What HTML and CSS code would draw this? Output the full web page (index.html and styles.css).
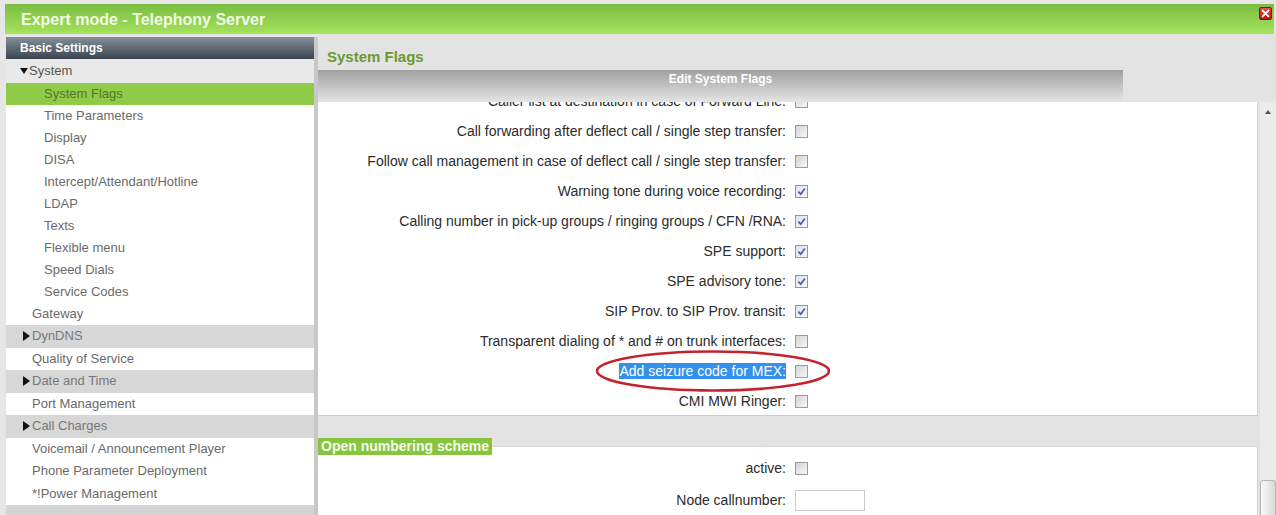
FILE: index.html
```html
<!DOCTYPE html>
<html lang="en">
<head>
<meta charset="utf-8">
<title>Expert mode - Telephony Server</title>
<link rel="stylesheet" href="styles.css">
</head>
<body>
<div class="app">
  <header class="titlebar">
    <h1 class="titlebar-text">Expert mode - Telephony Server</h1>
    <button class="close-btn" type="button" aria-label="Close">
      <svg viewBox="0 0 11 11" width="11" height="11"><path d="M2.6 2.6 L8.4 8.4 M8.4 2.6 L2.6 8.4" stroke="#fff" stroke-width="2" stroke-linecap="round"/></svg>
    </button>
  </header>

  <div class="main">
    <nav class="sidebar">
      <div class="nav-head">Basic Settings</div>
      <ul class="nav">
        <li class="nav-group open">System</li>
        <li class="nav-sub active">System Flags</li>
        <li class="nav-sub">Time Parameters</li>
        <li class="nav-sub">Display</li>
        <li class="nav-sub">DISA</li>
        <li class="nav-sub">Intercept/Attendant/Hotline</li>
        <li class="nav-sub">LDAP</li>
        <li class="nav-sub">Texts</li>
        <li class="nav-sub">Flexible menu</li>
        <li class="nav-sub">Speed Dials</li>
        <li class="nav-sub">Service Codes</li>
        <li class="nav-top">Gateway</li>
      </ul>
      <ul class="nav nav-loose">
        <li class="nav-group closed">DynDNS</li>
        <li class="nav-top">Quality of Service</li>
        <li class="nav-group closed">Date and Time</li>
        <li class="nav-top">Port Management</li>
        <li class="nav-group closed">Call Charges</li>
        <li class="nav-top">Voicemail / Announcement Player</li>
        <li class="nav-top">Phone Parameter Deployment</li>
        <li class="nav-top">*!Power Management</li>
      </ul>
    </nav>

    <section class="content">
      <h2 class="page-title">System Flags</h2>
      <div class="tabbar">Edit System Flags</div>

      <div class="content-body">
        <div class="pane">
          <div class="flags">
            <div class="flag-list">
              <div class="field"><label>Caller list at destination in case of Forward Line:</label><span class="cb"></span></div>
              <div class="field"><label>Call forwarding after deflect call / single step transfer:</label><span class="cb"></span></div>
              <div class="field"><label>Follow call management in case of deflect call / single step transfer:</label><span class="cb"></span></div>
              <div class="field"><label>Warning tone during voice recording:</label><span class="cb checked"><svg viewBox="0 0 11 11" width="11" height="11"><path d="M2.4 5.6 L4.7 8.2 L8.9 2.6" fill="none" stroke="#4a58a6" stroke-width="1.7"/></svg></span></div>
              <div class="field"><label>Calling number in pick-up groups / ringing groups / CFN /RNA:</label><span class="cb checked"><svg viewBox="0 0 11 11" width="11" height="11"><path d="M2.4 5.6 L4.7 8.2 L8.9 2.6" fill="none" stroke="#4a58a6" stroke-width="1.7"/></svg></span></div>
              <div class="field"><label>SPE support:</label><span class="cb checked"><svg viewBox="0 0 11 11" width="11" height="11"><path d="M2.4 5.6 L4.7 8.2 L8.9 2.6" fill="none" stroke="#4a58a6" stroke-width="1.7"/></svg></span></div>
              <div class="field"><label>SPE advisory tone:</label><span class="cb checked"><svg viewBox="0 0 11 11" width="11" height="11"><path d="M2.4 5.6 L4.7 8.2 L8.9 2.6" fill="none" stroke="#4a58a6" stroke-width="1.7"/></svg></span></div>
              <div class="field"><label>SIP Prov. to SIP Prov. transit:</label><span class="cb checked"><svg viewBox="0 0 11 11" width="11" height="11"><path d="M2.4 5.6 L4.7 8.2 L8.9 2.6" fill="none" stroke="#4a58a6" stroke-width="1.7"/></svg></span></div>
              <div class="field"><label>Transparent dialing of * and # on trunk interfaces:</label><span class="cb"></span></div>
              <div class="field"><label><span class="selected">Add seizure code for MEX:<svg class="mark" viewBox="0 0 238 44" width="238" height="44"><ellipse cx="118" cy="22" rx="116" ry="19.5" fill="none" stroke="#c4232b" stroke-width="2.6"/></svg></span></label><span class="cb"></span></div>
              <div class="field"><label>CMI MWI Ringer:</label><span class="cb"></span></div>
            </div>
          </div>

          <div class="numbering">
            <div class="legend">Open numbering scheme</div>
            <div class="field"><label>active:</label><span class="cb"></span></div>
            <div class="field"><label>Node callnumber:</label><span class="textbox"></span></div>
          </div>
        </div>

        <div class="scrollbar">
          <span class="sb-arrow"></span>
          <span class="sb-thumb"></span>
        </div>
      </div>
    </section>
  </div>
</div>
</body>
</html>
```

FILE: styles.css
```css
* {
  box-sizing: border-box;
}

html,
body {
  margin: 0;
  height: 100%;
}

body {
  background: #e6e6e6;
  font-family: "Liberation Sans", Arial, sans-serif;
  overflow: hidden;
}

.app {
  height: 515px;
  display: flex;
  flex-direction: column;
  padding-top: 4px;
}

/* ---------- window title ---------- */
.titlebar {
  height: 30px;
  margin: 0 2px 0 5px;
  display: flex;
  justify-content: space-between;
  align-items: flex-start;
  background: linear-gradient(#79bc40, #a6e35d);
}

.titlebar-text {
  margin: 0;
  padding: 2px 0 0 16px;
  font-size: 16px;
  line-height: 28px;
  font-weight: bold;
  color: #f1f9e6;
}

.close-btn {
  margin: 3px 2px 0 0;
  width: 13px;
  height: 13px;
  padding: 0;
  border: 1px solid #8a0d0d;
  border-radius: 2px;
  background: linear-gradient(#ee4a42, #b3140f);
  display: flex;
  align-items: center;
  justify-content: center;
}

/* ---------- layout ---------- */
.main {
  flex: 1;
  min-height: 0;
  display: flex;
}

.sidebar {
  width: 312px;
  margin: 3px 0 0 6px;
  background: #d4d4d4;
  border-right: 4px solid #c8c8c8;
}

.content {
  flex: 1;
  min-width: 0;
  display: flex;
  flex-direction: column;
  background: #e3e3e3;
}

/* ---------- navigation ---------- */
.nav-head {
  height: 22px;
  line-height: 22px;
  padding-left: 14px;
  font-size: 12px;
  font-weight: bold;
  color: #fff;
  background: linear-gradient(#858f98, #3a4450);
}

.nav {
  list-style: none;
  margin: 0;
  padding: 0;
  font-size: 13px;
}

.nav li {
  height: 22px;
  line-height: 22px;
  background: #fff;
  color: #6a6a6a;
  white-space: nowrap;
}

.nav-loose li {
  height: 22.5px;
  line-height: 22.5px;
}

.nav-sub {
  padding-left: 38px;
}

.nav-top {
  padding-left: 26px;
}

.nav .nav-group {
  display: flex;
  align-items: center;
  background: #d7d7d7;
  color: #777;
  padding-left: 17px;
}

.nav-group.closed::before {
  content: "";
  margin-right: 2px;
  border-top: 5px solid transparent;
  border-bottom: 5px solid transparent;
  border-left: 7px solid #111;
}

.nav .nav-group.open {
  height: 24px;
  background: #e9e9e9;
  color: #555;
  padding-left: 14px;
}

.nav-group.open::before {
  content: "";
  margin-right: 1px;
  border-left: 4.5px solid transparent;
  border-right: 4.5px solid transparent;
  border-top: 6px solid #111;
}

.nav .nav-sub.active {
  background: #8fcb47;
  color: #55742f;
}

/* ---------- page header ---------- */
.page-title {
  margin: 0;
  height: 36px;
  padding: 14px 0 0 9px;
  font-size: 15px;
  line-height: 18px;
  font-weight: bold;
  color: #6b9a30;
}

.tabbar {
  width: 805px;
  height: 32px;
  line-height: 18px;
  text-align: center;
  font-size: 12px;
  font-weight: bold;
  color: #fff;
  background: linear-gradient(#a0a0a0, #e5e5e5);
}

/* ---------- form body ---------- */
.content-body {
  flex: 1;
  min-height: 0;
  display: flex;
  gap: 2px;
  overflow: hidden;
}

.pane {
  width: 940px;
  display: flex;
  flex-direction: column;
}

.flags {
  height: 314px;
  flex: none;
  background: #fff;
  border-right: 1px solid #d2d2d2;
  border-bottom: 1px solid #cdcdcd;
  overflow: hidden;
}

.flag-list {
  margin-top: -16px;
}

.field {
  height: 30px;
  display: grid;
  grid-template-columns: 468px auto;
  column-gap: 9px;
  align-items: center;
  justify-items: start;
  font-size: 14px;
  color: #2b2b2b;
}

.field label {
  justify-self: end;
  white-space: nowrap;
}

.selected {
  position: relative;
  background: #3390ec;
  color: #fff;
}

.mark {
  position: absolute;
  left: -24px;
  top: -14px;
  pointer-events: none;
}

.cb {
  width: 13px;
  height: 13px;
  border: 1px solid #9b9b9b;
  background: linear-gradient(135deg, #d4d4d4, #f7f7f7);
  display: flex;
  align-items: center;
  justify-content: center;
}

.cb.checked {
  border-color: #8f95aa;
  background: linear-gradient(135deg, #dde1ec, #f8f9fc);
}

.textbox {
  width: 70px;
  height: 21px;
  border: 1px solid #c9c9c9;
  background: #fff;
}

.numbering {
  flex: 1;
  margin-top: 30px;
  background: #fff;
  border-top: 1px solid #d6d6d6;
  border-right: 1px solid #d2d2d2;
}

.legend {
  width: max-content;
  height: 17px;
  margin: -9px 0 -2px;
  padding: 0 3px;
  line-height: 17px;
  font-size: 14px;
  font-weight: bold;
  color: #f3fae9;
  background: #87c440;
}

.numbering .field {
  margin-bottom: 2px;
}

/* ---------- scrollbar ---------- */
.scrollbar {
  width: 16px;
  flex: none;
  display: flex;
  flex-direction: column;
  align-items: center;
  background: #ebebeb;
}

.sb-arrow {
  margin-top: 8px;
  border-left: 3.5px solid transparent;
  border-right: 3.5px solid transparent;
  border-bottom: 4px solid #555;
}

.sb-thumb {
  flex: none;
  width: 16px;
  height: 40px;
  margin-top: 366px;
  border: 1px solid #b4b4b4;
  border-radius: 3px 3px 0 0;
  background: linear-gradient(90deg, #fafafa, #d9d9d9);
}
```
